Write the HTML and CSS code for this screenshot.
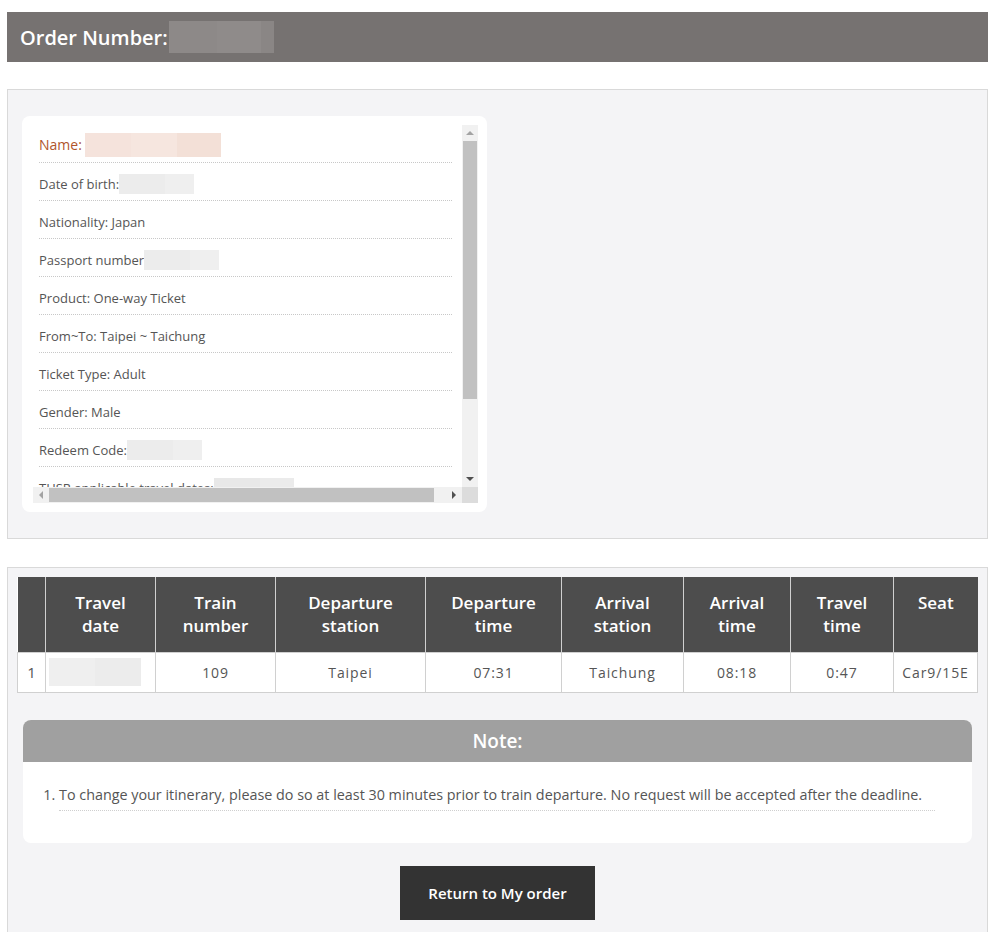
FILE: index.html
```html
<!DOCTYPE html>
<html lang="en">
<head>
<meta charset="utf-8">
<title>Order</title>
<link rel="stylesheet" href="styles.css">
</head>
<body>
<div class="page">
  <div class="order-head">
    <h1>Order Number:</h1>
    <span class="blur blur-order"><i></i><i></i><i></i></span>
  </div>

  <section class="panel panel-info">
    <div class="card">
      <div class="scrollbox">
        <div class="viewport">
          <ul class="info">
            <li class="name">Name:<span class="blur blur-name"><i></i><i></i><i></i></span></li>
            <li>Date of birth: <span class="blur blur-sm"><i></i><i></i></span></li>
            <li>Nationality: Japan</li>
            <li>Passport number<span class="blur blur-sm"><i></i><i></i></span></li>
            <li>Product: One-way Ticket</li>
            <li>From~To: Taipei ~ Taichung</li>
            <li>Ticket Type: Adult</li>
            <li>Gender: Male</li>
            <li>Redeem Code:<span class="blur blur-sm"><i></i><i></i></span></li>
            <li>THSR applicable travel dates:<span class="blur blur-md"><i></i><i></i></span></li>
          </ul>
        </div>
        <div class="vbar">
          <span class="arrow up"></span>
          <span class="vthumb"></span>
          <span class="vspace"></span>
          <span class="arrow down"></span>
        </div>
        <div class="hbar">
          <span class="arrow left"></span>
          <span class="hthumb"></span>
          <span class="hspace"></span>
          <span class="arrow right"></span>
        </div>
        <div class="corner"></div>
      </div>
    </div>
  </section>

  <section class="panel panel-trip">
    <table class="trip">
      <colgroup>
        <col style="width:28px"><col style="width:110px"><col style="width:120px"><col style="width:150px"><col style="width:136px"><col style="width:122px"><col style="width:107px"><col style="width:103px"><col style="width:84px">
      </colgroup>
      <thead>
        <tr>
          <th></th>
          <th>Travel<br>date</th>
          <th>Train<br>number</th>
          <th>Departure<br>station</th>
          <th>Departure<br>time</th>
          <th>Arrival<br>station</th>
          <th>Arrival<br>time</th>
          <th>Travel<br>time</th>
          <th>Seat<br>&nbsp;</th>
        </tr>
      </thead>
      <tbody>
        <tr>
          <td>1</td>
          <td class="date-cell"><span class="blur blur-date"><i></i><i></i></span></td>
          <td>109</td>
          <td>Taipei</td>
          <td>07:31</td>
          <td>Taichung</td>
          <td>08:18</td>
          <td>0:47</td>
          <td>Car9/15E</td>
        </tr>
      </tbody>
    </table>

    <div class="note">
      <h2>Note:</h2>
      <ol>
        <li>To change your itinerary, please do so at least 30 minutes prior to train departure. No request will be accepted after the deadline.</li>
      </ol>
    </div>

    <div class="actions">
      <a class="btn" href="#">Return to My order</a>
    </div>
  </section>
</div>
</body>
</html>
```

FILE: styles.css
```css
* { box-sizing: border-box; }
html, body { margin: 0; padding: 0; background: #fff; }
body { font-family: "Open Sans", "Noto Sans", Arial, sans-serif; color: #555; }

.page { width: 981px; margin-left: 7px; padding-top: 12px; }

.order-head {
  height: 50px;
  background: #767271;
  display: flex;
  align-items: center;
  padding-left: 13px;
}
.order-head h1 {
  margin: 0;
  font-size: 20px;
  font-weight: 600;
  color: #fff;
  letter-spacing: 0;
}
.blur { display: inline-flex; vertical-align: middle; }
.blur i { display: block; height: 100%; }
.blur-order { height: 32px; margin-left: 1px; }
.blur-order i:nth-child(1) { width: 48px; background: #8d8988; }
.blur-order i:nth-child(2) { width: 44px; background: #8f8b8a; }
.blur-order i:nth-child(3) { width: 13px; background: #8a8685; }

.panel {
  background: #f4f4f6;
  border: 1px solid #d9d9d9;
}
.panel-info {
  margin-top: 27px;
  padding: 26px 14px;
  height: 450px;
}
.card {
  width: 465px;
  height: 396px;
  background: #fff;
  border-radius: 8px;
  padding: 9px 9px 9px 11px;
}
.scrollbox {
  display: grid;
  grid-template-columns: 429px 16px;
  grid-template-rows: 362px 16px;
  width: 445px;
  height: 378px;
}
.viewport { overflow: hidden; }
.info {
  list-style: none;
  margin: 0;
  padding: 0 10px 0 6px;
}
.info li {
  height: 38px;
  display: flex;
  align-items: center;
  padding-top: 4px;
  font-size: 13px;
  color: #555;
  border-bottom: 1px dotted #c8c8c8;
  white-space: nowrap;
}
.info li.name { color: #b0552b; font-size: 14px; padding-top: 2px; }
.blur-name { height: 24px; margin-left: 3px; }
.blur-name i:nth-child(1) { width: 46px; background: #f5e3dc; }
.blur-name i:nth-child(2) { width: 46px; background: #f6e6df; }
.blur-name i:nth-child(3) { width: 44px; background: #f3e0d7; }
.blur-sm { height: 20px; }
.blur-sm i:nth-child(1) { width: 46px; background: #ececec; }
.blur-sm i:nth-child(2) { width: 29px; background: #efefef; }
.blur-md { height: 20px; }
.blur-md i:nth-child(1) { width: 46px; background: #e8e8e8; }
.blur-md i:nth-child(2) { width: 34px; background: #ebebeb; }

.vbar, .hbar { background: #f1f1f1; display: flex; }
.vbar { flex-direction: column; align-items: center; }
.hbar { align-items: center; }
.corner { background: #dcdcdc; }
.vthumb { width: 14px; height: 258px; background: #c1c1c1; flex: none; }
.vspace { flex: 1; }
.hthumb { height: 14px; width: 385px; background: #c1c1c1; flex: none; }
.hspace { flex: 1; }
.arrow { width: 16px; height: 16px; flex: none; display: block; position: relative; }
.arrow::after { content: ""; position: absolute; width: 0; height: 0; border: 4px solid transparent; }
.arrow.up::after { left: 4px; top: 2px; border-bottom-color: #a3a3a3; }
.arrow.down::after { left: 4px; top: 6px; border-top-color: #505050; }
.arrow.left::after { left: 2px; top: 4px; border-right-color: #a3a3a3; }
.arrow.right::after { left: 6px; top: 4px; border-left-color: #505050; }

.panel-trip {
  margin-top: 28px;
  padding: 9px 9px 30px;
}
.trip {
  width: 960px;
  table-layout: fixed;
  border-collapse: collapse;
  background: #fff;
}
.trip th {
  background: #4d4d4d;
  color: #fff;
  font-size: 17px;
  font-weight: 600;
  line-height: 23px;
  height: 75px;
  vertical-align: top;
  padding: 14px 0 0;
  border-left: 1px solid #d0d0d0;
  text-align: center;
}
.trip th:first-child { border-left: 0; }
.trip td {
  height: 40px;
  text-align: center;
  font-size: 14px;
  letter-spacing: 0.9px;
  color: #555;
  border: 1px solid #d0d0d0;
  padding: 0;
}
.trip td:first-child { letter-spacing: 0; font-size: 15px; }
.trip .date-cell { text-align: left; padding-left: 3px; }
.blur-date { height: 28px; }
.blur-date i:nth-child(1) { width: 46px; background: #efefef; }
.blur-date i:nth-child(2) { width: 46px; background: #ececec; }

.note {
  margin: 27px 6px 0;
  background: #fff;
  border-radius: 8px;
  overflow: hidden;
}
.note h2 {
  margin: 0;
  height: 42px;
  background: #a0a0a0;
  color: #fff;
  font-size: 19px;
  font-weight: 600;
  text-align: center;
  line-height: 42px;
}
.note ol {
  margin: 0;
  padding: 22px 37px 32px 36px;
}
.note li {
  font-size: 14.35px;
  color: #555;
  line-height: 22px;
  padding-bottom: 4px;
  border-bottom: 1px dotted #cfcfcf;
}

.actions { display: flex; justify-content: center; margin-top: 23px; }
.btn {
  width: 195px;
  height: 54px;
  background: #333;
  color: #fff;
  font-size: 15px;
  font-weight: 600;
  text-decoration: none;
  display: flex;
  align-items: center;
  justify-content: center;
}
```
